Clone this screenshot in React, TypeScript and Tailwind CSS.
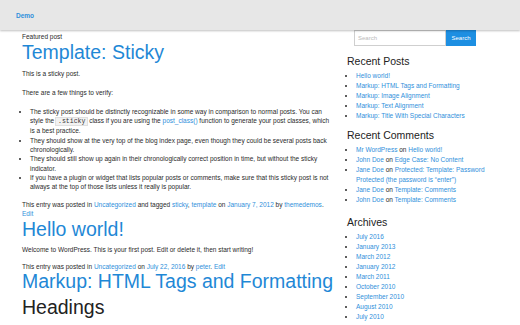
import React from "react";

const linkCls = "text-[#2f8fdb]";

function A({ children }: { children: React.ReactNode }) {
  return <a className={linkCls}>{children}</a>;
}

const recentPosts = [
  "Hello world!",
  "Markup: HTML Tags and Formatting",
  "Markup: Image Alignment",
  "Markup: Text Alignment",
  "Markup: Title With Special Characters",
];

const recentComments: [string, string][] = [
  ["Mr WordPress", "Hello world!"],
  ["John Doe", "Edge Case: No Content"],
  ["Jane Doe", "Protected: Template: Password Protected (the password is \u201center\u201d)"],
  ["Jane Doe", "Template: Comments"],
  ["John Doe", "Template: Comments"],
];

const archives = [
  "July 2016",
  "January 2013",
  "March 2012",
  "January 2012",
  "March 2011",
  "October 2010",
  "September 2010",
  "August 2010",
  "July 2010",
];

function SidebarHeading({ children, className }: { children: React.ReactNode; className?: string }) {
  return <h3 className={`text-[10.5px] leading-[12px] text-[#222] ${className ?? ""}`}>{children}</h3>;
}

const titleCls = "text-[19.5px] leading-[21.5px]";

export default function App() {
  return (
    <div className="w-[520px] h-[325px] overflow-hidden bg-white text-[#2a2a2a] font-['Liberation_Sans',Arial,sans-serif] text-[6.5px] leading-[9.3px]">
      <header className="h-[30px] bg-[#e7e7e7] shadow-[0_1px_2px_rgba(0,0,0,0.25)] flex items-center pl-[16px] relative z-10">
        <span className="text-[6.5px] font-bold text-[#2f8fdb] mt-[2px]">Demo</span>
      </header>

      <div className="flex">
        <main className="ml-[22px] w-[310px] shrink-0">
          <div className="mt-[2px]">Featured post</div>
          <h1 className={`${titleCls} text-[#1f88d6] mt-[1px]`}>Template: Sticky</h1>
          <p className="mt-[5px]">This is a sticky post.</p>
          <p className="mt-[9.7px]">There are a few things to verify:</p>
          <ul className="mt-[9.7px] list-disc pl-[8px]">
            <li>
              The sticky post should be distinctly recognizable in some way in comparison to normal posts. You can
              style the{" "}
              <code className="font-['Liberation_Mono',monospace] bg-[#f2f2f2] outline outline-[#e0e0e0] px-[2px] text-[#333]">
                .sticky
              </code>{" "}
              class if you are using the <A>post_class()</A> function to generate your post classes, which is a best
              practice.
            </li>
            <li>
              They should show at the very top of the blog index page, even though they could be several posts back
              chronologically.
            </li>
            <li>
              They should still show up again in their chronologically correct position in time, but without the
              sticky indicator.
            </li>
            <li>
              If you have a plugin or widget that lists popular posts or comments, make sure that this sticky post is
              not always at the top of those lists unless it really is popular.
            </li>
          </ul>
          <p className="mt-[8.2px]">
            This entry was posted in <A>Uncategorized</A> and tagged <A>sticky</A>, <A>template</A> on{" "}
            <A>January 7, 2012</A> by <A>themedemos</A>. <A>Edit</A>
          </p>

          <h1 className={`${titleCls} text-[#1f88d6] mt-[1px]`}>Hello world!</h1>
          <p className="mt-[4px]">Welcome to WordPress. This is your first post. Edit or delete it, then start writing!</p>
          <p className="mt-[7.5px]">
            This entry was posted in <A>Uncategorized</A> on <A>July 22, 2016</A> by <A>peter</A>. <A>Edit</A>
          </p>

          <h1 className={`${titleCls} text-[#1f88d6] mt-[0px] whitespace-nowrap`}>Markup: HTML Tags and Formatting</h1>
          <h1 className={`${titleCls} text-[#222] mt-[5px]`}>Headings</h1>
        </main>

        <aside className="ml-[15px] w-[145px] shrink-0 leading-[10.1px]">
          <form className="flex ml-[7px] h-[16px]">
            <input
              className="w-[92px] h-[16px] border border-[#cfcfcf] px-[3px] text-[6px] text-[#999] placeholder:text-[#bbb] outline-none"
              placeholder="Search"
            />
            <button type="button" className="w-[30px] h-[16px] bg-[#1d8fe2] text-white text-[6px]">
              Search
            </button>
          </form>

          <SidebarHeading className="mt-[8.5px]">Recent Posts</SidebarHeading>
          <ul className="mt-[4px] list-disc pl-[9px]">
            {recentPosts.map(p => (
              <li key={p}>
                <A>{p}</A>
              </li>
            ))}
          </ul>

          <SidebarHeading className="mt-[8px]">Recent Comments</SidebarHeading>
          <ul className="mt-[4px] list-disc pl-[9px]">
            {recentComments.map(([who, what], i) => (
              <li key={i}>
                <A>{who}</A> on <A>{what}</A>
              </li>
            ))}
          </ul>

          <SidebarHeading className="mt-[10px]">Archives</SidebarHeading>
          <ul className="mt-[4px] list-disc pl-[9px]">
            {archives.map(a => (
              <li key={a}>
                <A>{a}</A>
              </li>
            ))}
          </ul>
        </aside>
      </div>
    </div>
  );
}
